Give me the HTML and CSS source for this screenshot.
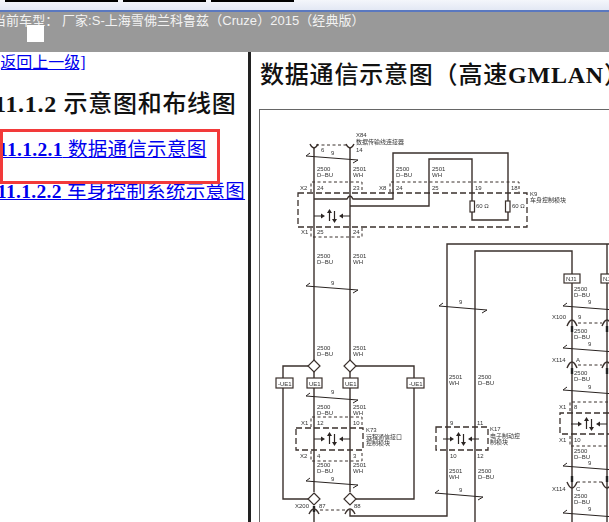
FILE: index.html
```html
<!DOCTYPE html>
<html lang="zh-CN">
<head>
    <meta charset="UTF-8">
    <meta name="viewport" content="width=device-width, initial-scale=1.0">
    <title>数据通信示意图</title>
    <link rel="stylesheet" href="styles.css">
</head>
<body>
    <div class="page">
        <!-- Tabs along the top edge -->
        <div class="tab-strip">
            <span class="tab tab-a"></span>
            <span class="tab tab-b"></span>
            <span class="tab tab-b"></span>
        </div>
        <div class="car-bar">
            <span class="car-text">当前车型： 厂家:S-上海雪佛兰科鲁兹（Cruze）2015（经典版）</span>
            <span class="car-mark"></span>
        </div>
        <div class="main">
            <div class="side">
                <a class="back" href="#">[返回上一级]</a>
                <h3 class="side-title"><b>11.1.2</b> 示意图和布线图</h3>
                <a class="side-link first" href="#"><b>11.1.2.1</b> 数据通信示意图</a>
                <a class="side-link" href="#"><b>11.1.2.2</b> 车身控制系统示意图</a>
                <span class="highlight"></span>
            </div>
            <div class="content">
                <h2 class="content-title">数据通信示意图（高速<b>GMLAN</b>）</h2>
                <div class="diagram">
                    <svg class="wiring" width="349" height="412" viewBox="260 110 349 412">
                        <defs>
                            <path id="twist" d="M4 -3 L0 0 L52 4 L47 7"/>
                            <path id="twist-s" d="M4 -3 L0 0 L48 4 L43 7"/>
                            <g id="flow">
                                <path d="M-18 0 H-10 M18 0 H10 M-2.5 5 V-5 M2.5 -5 V5"/>
                                <path class="head" d="M-11 -2.5 L-7 0 L-11 2.5 Z M11 -2.5 L7 0 L11 2.5 Z M-5 -3 L-2.5 -7 L0 -3 Z M0 3 L2.5 7 L5 3 Z"/>
                            </g>
                        </defs>

                        <!-- main wires -->
                        <path class="wire" d="M314 147 V366 M350 147 V366"/>
                        <path class="wire" d="M314 199 H347 Q350 193 353 199 H393 V153 H508 V220 H472 V159 H429 V206 H350"/>
                        <path class="wire" d="M314 372 V492 M350 372 V492"/>
                        <path class="wire" d="M308 366 H283 V378 M356 366 H414 V378"/>
                        <path class="wire" d="M283 388 V499 H308 M414 388 V499 H356"/>
                        <path class="wire" d="M314 512 V522 M350 510 V516 H447 V244 H609"/>
                        <path class="wire" d="M475 522 V251 H572 V274 M572 283 V522 M607 244 V522"/>
                        <path class="pin" d="M572 326 V332 M607 326 V332 M572 368 V374 M607 368 V374 M572 476 V482 M607 476 V482 M314 506 V512"/>

                        <!-- dashed module outlines -->
                        <path class="dash" d="M316 145 H348"/>
                        <path class="dash" d="M311 192 V182 H362 V192 M390 192 V182 H519 V192"/>
                        <path class="dash heavy" d="M298 193 H527 V227 H298 Z"/>
                        <path class="dash" d="M311 228 V237 H362 V228"/>
                        <path class="dash" d="M311 427 V417 H362 V427"/>
                        <path class="dash heavy" d="M296 428 H363 V450 H296 Z"/>
                        <path class="dash" d="M311 451 V461 H362 V451"/>
                        <path class="dash" d="M320 510 H345"/>
                        <path class="dash heavy" d="M436 427 H488 V450 H436 Z"/>
                        <path class="dash" d="M578 323 H602 M578 365 H602 M577 482 H602"/>
                        <path class="dash" d="M570 411 V402 H609 M570 436 V446 H609"/>
                        <path class="dash heavy" d="M609 413 H560 V434 H609"/>

                        <!-- connector cups -->
                        <path class="wire" d="M310 144 Q314 152 318 144 M346 144 Q350 152 354 144"/>
                        <path class="wire" d="M309 514 Q314 504 319 514 M345 514 Q350 504 355 514"/>
                        <path class="wire" d="M567 326 Q572 314 577 326 M602 326 Q607 314 612 326"/>
                        <path class="wire" d="M567 368 Q572 356 577 368 M602 368 Q607 356 612 368"/>
                        <path class="wire" d="M567 482 Q572 494 577 482 M602 482 Q607 494 612 482"/>

                        <!-- resistors -->
                        <rect class="part" x="470" y="201" width="4.5" height="11"/>
                        <rect class="part" x="505.500" y="201" width="4.500" height="11"/>

                        <!-- splice diamonds -->
                        <path class="part" d="M314 360 L320 366 L314 372 L308 366 Z M350 360 L356 366 L350 372 L344 366 Z"/>
                        <path class="part" d="M314 493 L320 499 L314 505 L308 499 Z M350 493 L356 499 L350 505 L344 499 Z"/>

                        <!-- twisted pair marks -->
                        <use class="twist" href="#twist" x="306" y="156"/>
                        <use class="twist" href="#twist" x="306" y="286"/>
                        <use class="twist" href="#twist" x="306" y="396"/>
                        <use class="twist" href="#twist" x="306" y="481"/>
                        <use class="twist" href="#twist-s" x="439" y="306"/>
                        <use class="twist" href="#twist-s" x="435" y="493"/>
                        <use class="twist" href="#twist" x="563" y="306"/>
                        <use class="twist" href="#twist" x="563" y="348"/>
                        <use class="twist" href="#twist" x="563" y="390"/>
                        <use class="twist" href="#twist" x="563" y="466"/>
                        <use class="twist" href="#twist" x="563" y="513"/>

                        <!-- data flow arrows -->
                        <use class="flow" href="#flow" x="332" y="216"/>
                        <use class="flow" href="#flow" x="332" y="439"/>
                        <use class="flow" href="#flow" x="461" y="439"/>
                        <use class="flow" href="#flow" x="589" y="424"/>

                        <!-- inline boxes -->
                        <g class="box-label">
                            <rect class="part" x="276" y="378" width="17" height="10"/>
                            <rect class="part" x="307" y="378" width="15" height="10"/>
                            <rect class="part" x="343" y="378" width="15" height="10"/>
                            <rect class="part" x="407" y="378" width="17" height="10"/>
                            <rect class="part" x="564" y="274" width="16" height="9"/>
                            <rect class="part" x="601" y="274" width="16" height="9"/>
                        </g>
                        <g class="label">
                            <text x="278" y="386">-UE1</text><text x="309" y="386">UE1</text>
                            <text x="345" y="386">UE1</text><text x="409" y="386">-UE1</text>
                            <text x="566" y="281">NJ1</text><text x="603" y="281">NJ</text>

                            <text x="356" y="137">X84</text><text x="356" y="144">数据传输线连接器</text>
                            <text x="321" y="152">6</text><text x="331" y="155">9</text><text x="356" y="152">14</text>
                            <text x="317" y="171">2500</text><text x="317" y="177">D–BU</text>
                            <text x="353" y="171">2501</text><text x="353" y="177">WH</text>
                            <text x="396" y="171">2500</text><text x="396" y="177">D–BU</text>
                            <text x="432" y="171">2501</text><text x="432" y="177">WH</text>
                            <text x="300" y="190">X2</text><text x="317" y="190">24</text><text x="353" y="190">23</text>
                            <text x="379" y="190">X8</text><text x="396" y="190">24</text><text x="432" y="190">25</text>
                            <text x="475" y="190">19</text><text x="511" y="190">18</text>
                            <text x="530" y="196">K9</text><text x="530" y="202">车身控制模块</text>
                            <text x="476" y="208">60 Ω</text><text x="512" y="208">60 Ω</text>
                            <text x="301" y="234">X1</text><text x="317" y="234">25</text><text x="353" y="234">24</text>

                            <text x="317" y="258">2500</text><text x="317" y="264">D–BU</text>
                            <text x="353" y="258">2501</text><text x="353" y="264">WH</text>
                            <text x="331" y="285">9</text>
                            <text x="317" y="350">2500</text><text x="317" y="356">D–BU</text>
                            <text x="353" y="350">2501</text><text x="353" y="356">WH</text>

                            <text x="331" y="394">9</text>
                            <text x="317" y="409">2500</text><text x="317" y="415">D–BU</text>
                            <text x="353" y="409">2501</text><text x="353" y="415">WH</text>
                            <text x="301" y="425">X1</text><text x="317" y="425">12</text><text x="353" y="425">10</text>
                            <text x="366" y="432">K73</text><text x="366" y="438.500">远程通信接口</text><text x="366" y="445">控制模块</text>
                            <text x="300" y="458">X2</text><text x="317" y="458">4</text><text x="353" y="458">3</text>
                            <text x="317" y="467">2500</text><text x="317" y="473">D–BU</text>
                            <text x="353" y="467">2501</text><text x="353" y="473">WH</text>
                            <text x="331" y="481">9</text>
                            <text x="295" y="508">X200</text><text x="319" y="508">87</text><text x="354" y="508">88</text>

                            <text x="459" y="304">9</text>
                            <text x="449" y="379">2501</text><text x="449" y="385">WH</text>
                            <text x="478" y="379">2500</text><text x="478" y="385">D–BU</text>
                            <text x="450" y="425">9</text><text x="477" y="425">11</text>
                            <text x="490" y="431">K17</text><text x="490" y="437.500">电子制动控</text><text x="490" y="444">制模块</text>
                            <text x="450" y="458">10</text><text x="477" y="458">12</text>
                            <text x="449" y="473">2501</text><text x="449" y="479">WH</text>
                            <text x="478" y="473">2500</text><text x="478" y="479">D–BU</text>
                            <text x="459" y="492">9</text>

                            <text x="574" y="291">2500</text><text x="574" y="297">D–BU</text>
                            <text x="588" y="304">9</text>
                            <text x="552" y="319">X100</text><text x="578" y="319">9</text>
                            <text x="574" y="333">2500</text><text x="574" y="339">D–BU</text>
                            <text x="588" y="346">9</text>
                            <text x="552" y="362">X114</text><text x="576" y="362">A</text>
                            <text x="574" y="375">2500</text><text x="574" y="381">D–BU</text>
                            <text x="588" y="389">9</text>
                            <text x="559" y="409">X1</text><text x="574" y="409">8</text>
                            <text x="559" y="442">X1</text><text x="574" y="442">10</text>
                            <text x="574" y="453">2500</text><text x="574" y="459">D–BU</text>
                            <text x="588" y="465">9</text>
                            <text x="552" y="491">X114</text><text x="576" y="491">C</text>
                            <text x="574" y="498">2500</text><text x="574" y="504">D–BU</text>
                            <text x="588" y="511">9</text>
                        </g>
                    </svg>
                </div>
            </div>
        </div>
    </div>
</body>
</html>
```
FILE: styles.css
```css
html, body {
    margin: 0;
    height: 100%;
    background-color: #fff;
    overflow: hidden;
}
.page {
    display: flex;
    flex-direction: column;
    width: 609px;
    height: 522px;
    overflow: hidden;
    font-family: "Liberation Serif", "Noto Sans CJK SC", serif;
    color: #111;
}
.tab-strip {
    display: flex;
    gap: 5px;
    height: 10px;
    padding-left: 5px;
    background: linear-gradient(#f4f6fb, #e3e8f4);
    border-bottom: 2px solid #5a78c0;
    box-sizing: content-box;
}
.tab {
    height: 2px;
    background-color: #000;
}
.tab-a {
    width: 113px;
}
.tab-b {
    width: 83px;
}
.car-bar {
    position: relative;
    height: 40px;
    background-color: #999;
    overflow: hidden;
}
.car-text {
    display: block;
    margin: 1px 0 0 -7px;
    font: 13px/16px "Liberation Sans", "Noto Sans CJK SC", sans-serif;
    letter-spacing: 0.05px;
    color: #f2f2f2;
    white-space: nowrap;
}
.car-mark {
    position: absolute;
    left: 27px;
    top: 13px;
    width: 17px;
    height: 17px;
    background-color: #fff;
}
.main {
    display: flex;
    flex: 1;
    min-height: 0;
}
.side {
    position: relative;
    flex: none;
    width: 248px;
    height: 100%;
    overflow: hidden;
    border-right: 3px solid #222;
}
.back {
    display: block;
    margin: 2px 0 0 -5px;
    font-size: 16px;
    line-height: 18px;
    color: #00e;
}
.side-title {
    margin: 18px 0 0 -6px;
    font-size: 24px;
    line-height: 28px;
    font-weight: 500;
    white-space: nowrap;
    letter-spacing: 0.7px;
}
.side-link {
    display: block;
    margin-top: 18px;
    margin-left: -3px;
    font-size: 19.500px;
    line-height: 24px;
    letter-spacing: 0.3px;
    color: #00e;
    white-space: nowrap;
}
.side-link.first {
    margin-top: 20px;
    margin-left: -2px;
}
.highlight {
    position: absolute;
    left: 0;
    top: 77px;
    width: 214px;
    height: 49px;
    border: 3px solid #f23a3a;
}
.content {
    flex: 1;
    min-width: 0;
    padding-left: 8px;
    overflow: hidden;
}
.content-title {
    margin: 9px 0 0 1px;
    font-size: 24px;
    line-height: 28px;
    font-weight: 500;
    letter-spacing: 0.8px;
    white-space: nowrap;
}
.diagram {
    margin-top: 20px;
    width: 400px;
    height: 500px;
    border: 1px solid #666;
    box-sizing: border-box;
}
.wiring {
    display: block;
    filter: blur(0.4px);
}
.wire {
    fill: none;
    stroke: #3a302c;
    stroke-width: 1.4;
}
.pin {
    fill: none;
    stroke: #222;
    stroke-width: 2.4;
}
.dash {
    fill: none;
    stroke: #3a302c;
    stroke-width: 1;
    stroke-dasharray: 3 2.5;
}
.dash.heavy {
    stroke-width: 1.3;
    stroke-dasharray: 6 3;
}
.part {
    fill: #fff;
    stroke: #3a302c;
    stroke-width: 1.2;
}
.twist {
    fill: none;
    stroke: #2a2422;
    stroke-width: 1;
}
.flow {
    fill: none;
    stroke: #2a2422;
    stroke-width: 1.2;
}
.head {
    fill: #2a2422;
    stroke: none;
}
.label {
    font-family: "Liberation Sans", "Noto Sans CJK SC", sans-serif;
    font-size: 6px;
    fill: #333;
}
```
